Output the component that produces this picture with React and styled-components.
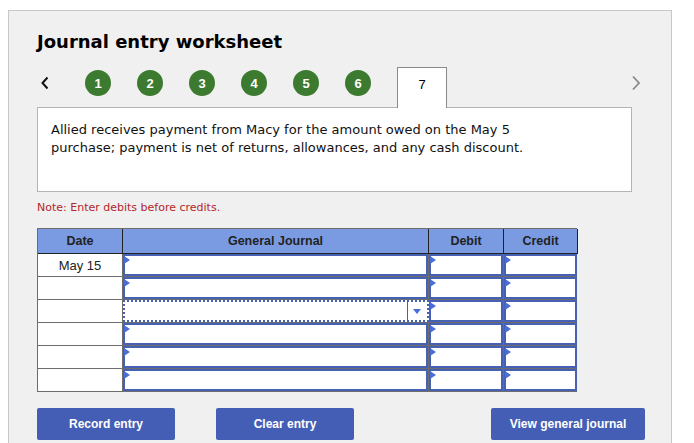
import styled, { createGlobalStyle } from 'styled-components';

const GlobalStyle = createGlobalStyle`
  html, body {
    margin: 0;
    padding: 0;
    background: #ffffff;
    overflow: hidden;
  }
`;

const ROWS = [
  { date: 'May 15' },
  { date: '' },
  { date: '', dropdown: true },
  { date: '' },
  { date: '' },
  { date: '' },
];

const StepNav = () => (
  <StyledNav>
    <svg width="10" height="14" viewBox="0 0 10 14">
      <path d="M7.5 1.5 L2.5 7 L7.5 12.5" fill="none" stroke="#111" strokeWidth="2" />
    </svg>
    <StyledSteps>
      {[1, 2, 3, 4, 5, 6].map((n) => (
        <StyledStep key={n}>{n}</StyledStep>
      ))}
    </StyledSteps>
    <StyledTab>7</StyledTab>
    <StyledNext>
      <svg width="10" height="16" viewBox="0 0 10 16">
        <path d="M2 1.5 L8 8 L2 14.5" fill="none" stroke="#8a8a8a" strokeWidth="1.8" />
      </svg>
    </StyledNext>
  </StyledNav>
);

const JournalTable = () => (
  <StyledTable>
    <StyledHead>Date</StyledHead>
    <StyledHead>General Journal</StyledHead>
    <StyledHead>Debit</StyledHead>
    <StyledHead>Credit</StyledHead>
    {ROWS.map((row, i) => [
      <StyledDateCell key={`d${i}`}>{row.date}</StyledDateCell>,
      row.dropdown ? (
        <StyledSelect key={`g${i}`}>
          <StyledSelectArrow />
        </StyledSelect>
      ) : (
        <StyledInput key={`g${i}`} />
      ),
      <StyledInput key={`db${i}`} />,
      <StyledInput key={`cr${i}`} />,
    ])}
  </StyledTable>
);

const App = () => (
  <>
    <GlobalStyle />
    <StyledPanel>
      <StyledTitle>Journal entry worksheet</StyledTitle>
      <StepNav />
      <StyledQuestion>
        Allied receives payment from Macy for the amount owed on the May 5
        <br />
        purchase; payment is net of returns, allowances, and any cash discount.
      </StyledQuestion>
      <StyledNote>Note: Enter debits before credits.</StyledNote>
      <JournalTable />
      <StyledActions>
        <StyledButton>Record entry</StyledButton>
        <StyledButton $gap="41px">Clear entry</StyledButton>
        <StyledButton $wide $gap="auto">View general journal</StyledButton>
      </StyledActions>
    </StyledPanel>
  </>
);

const StyledPanel = styled.div`
  box-sizing: border-box;
  width: 664px;
  min-height: 460px;
  margin: 10px 0 0 8px;
  padding: 21px 26px 0 28px;
  background: #f0f0f0;
  border: 1px solid #c8c8c8;
  font-family: 'DejaVu Sans', Verdana, sans-serif;
`;

const StyledTitle = styled.h1`
  margin: 0;
  font-size: 18px;
  font-weight: bold;
  line-height: 20px;
  color: #000;
`;

const StyledNav = styled.div`
  display: flex;
  align-items: flex-start;
  height: 40px;
  margin-top: 15px;
  padding-left: 3px;

  > svg {
    margin-top: 9px;
  }
`;

const StyledSteps = styled.div`
  display: flex;
  gap: 26px;
  margin-left: 35px;
  margin-top: 3px;
`;

const StyledStep = styled.div`
  width: 26px;
  height: 26px;
  border-radius: 50%;
  background: #3c7a30;
  color: #fff;
  display: flex;
  align-items: center;
  justify-content: center;
  font-family: 'Liberation Sans', Arial, sans-serif;
  font-size: 13px;
  font-weight: bold;
`;

const StyledTab = styled.div`
  position: relative;
  z-index: 1;
  box-sizing: border-box;
  width: 50px;
  height: 41px;
  margin-left: 26px;
  padding-top: 9px;
  background: #fff;
  border: 1px solid #8a8a8a;
  border-bottom: none;
  text-align: center;
  font-family: 'Liberation Sans', Arial, sans-serif;
  font-size: 13px;
  color: #000;
`;

const StyledNext = styled.div`
  margin-left: auto;
  margin-right: 4px;
  margin-top: 8px;
`;

const StyledQuestion = styled.div`
  box-sizing: border-box;
  width: 595px;
  height: 85px;
  padding: 13px 13px;
  background: #fff;
  border: 1px solid #b4b4b4;
  font-size: 13px;
  line-height: 18px;
  color: #111;
`;

const StyledNote = styled.div`
  margin-top: 9px;
  font-size: 11px;
  color: #b3262a;
`;

const StyledTable = styled.div`
  display: grid;
  grid-template-columns: 84px 305px 74px 73px;
  grid-template-rows: 24px repeat(6, 22px);
  gap: 1px;
  width: 540px;
  box-sizing: border-box;
  margin-top: 14px;
  background: #6d6d6d;
  border: 1px solid #6d6d6d;
`;

const StyledHead = styled.div`
  display: flex;
  align-items: center;
  justify-content: center;
  background: #7a9be2;
  border-bottom: 1px solid #222;
  margin-bottom: -1px;
  box-shadow: 1px 0 0 #222;
  font-family: 'Liberation Sans', Arial, sans-serif;
  font-size: 12.5px;
  font-weight: bold;
  color: #222;
`;

const StyledDateCell = styled.div`
  display: flex;
  align-items: center;
  justify-content: center;
  background: #fff;
  font-family: 'Liberation Sans', Arial, sans-serif;
  font-size: 13px;
  color: #222;
`;

const StyledInput = styled.div`
  position: relative;
  box-sizing: border-box;
  background: #fff;
  border: 2px solid #4661b3;

  &::before {
    content: '';
    position: absolute;
    left: -1px;
    top: 0;
    border-left: 6px solid #4a6ed6;
    border-top: 4px solid transparent;
    border-bottom: 4px solid transparent;
  }
`;

const StyledSelect = styled.div`
  position: relative;
  box-sizing: border-box;
  display: flex;
  justify-content: flex-end;
  background: #fff;
  border: 2px dotted #4661b3;
  margin-right: -1px;
`;

const StyledSelectArrow = styled.div`
  position: relative;
  width: 19px;
  border-left: 1px solid #4661b3;

  &::after {
    content: '';
    position: absolute;
    left: 5px;
    top: 7px;
    border-top: 5px solid #4a6ed6;
    border-left: 4.5px solid transparent;
    border-right: 4.5px solid transparent;
  }
`;

const StyledActions = styled.div`
  display: flex;
  margin-top: 16px;
`;

const StyledButton = styled.button`
  width: ${(p) => (p.$wide ? '154px' : '138px')};
  height: 32px;
  margin-left: ${(p) => p.$gap || '0'};
  padding: 0;
  border: none;
  border-radius: 2px;
  background: #455eb5;
  color: #fff;
  font-family: 'Liberation Sans', Arial, sans-serif;
  font-size: 12px;
  font-weight: bold;
  cursor: pointer;
`;

export default App;
